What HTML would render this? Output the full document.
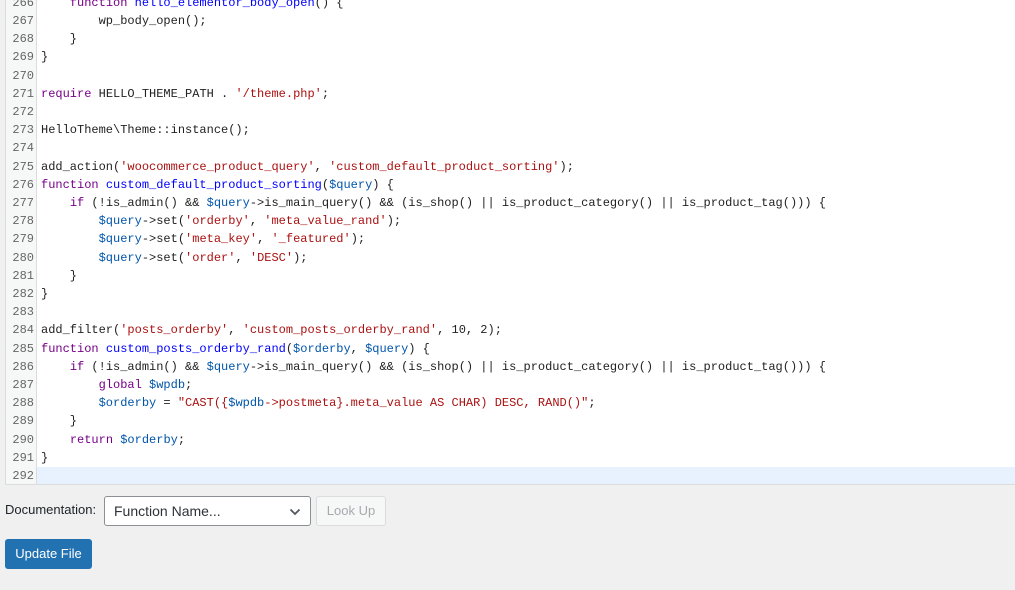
<!DOCTYPE html>
<html><head><meta charset="utf-8"><style>
body{margin:0;width:1015px;height:590px;background:#f0f0f1;position:relative;overflow:hidden;font-family:"Liberation Sans",sans-serif}
#ed{position:absolute;left:5px;top:0;width:1010px;height:485px;background:#fff;border-left:1px solid #dcdcde;border-bottom:1px solid #dcdcde;box-sizing:border-box;overflow:hidden}
#gut{position:absolute;left:0;top:0;width:30px;height:100%;background:#f6f7f7;border-right:1px solid #dcdcde}
#cur{position:absolute;left:31px;right:0;top:467px;height:18px;background:#e8f2fe}
#lines{position:absolute;left:0;top:-6.3px;font:12px/18.2px "Liberation Mono",monospace;color:#222;white-space:pre}
.n{display:inline-block;width:28px;text-align:right;color:#666;margin-right:7px}
.k{color:#708}.d{color:#00f}.v{color:#05a}.s{color:#a11}
#lab{position:absolute;left:5px;top:502px;font-size:13px;color:#1d2327}
#sel{position:absolute;left:104px;top:496px;width:207px;height:30px;box-sizing:border-box;border:1px solid #8c8f94;border-radius:3px;background:#fff;font-size:14px;color:#2c3338;padding:6px 0 0 9px}
#sel svg{position:absolute;right:9px;top:11px}
#lu{position:absolute;left:316px;top:496px;width:70px;height:30px;box-sizing:border-box;border:1px solid #dcdcde;border-radius:3px;background:#f6f7f7;color:#a7aaad;font-size:13px;text-align:center;line-height:28px}
#up{position:absolute;left:5px;top:539px;width:87px;height:30px;border-radius:3px;background:#2271b1;color:#fff;font-size:13px;text-align:center;line-height:30px}
</style></head><body>
<div id="ed"><div id="gut"></div><div id="cur"></div>
<div id="lines"><span class="n">266</span>    <span class="k">function</span> <span class="d">hello_elementor_body_open</span>() {
<span class="n">267</span>        wp_body_open();
<span class="n">268</span>    }
<span class="n">269</span>}
<span class="n">270</span>
<span class="n">271</span><span class="k">require</span> HELLO_THEME_PATH . <span class="s">'/theme.php'</span>;
<span class="n">272</span>
<span class="n">273</span>HelloTheme\Theme::instance();
<span class="n">274</span>
<span class="n">275</span>add_action(<span class="s">'woocommerce_product_query'</span>, <span class="s">'custom_default_product_sorting'</span>);
<span class="n">276</span><span class="k">function</span> <span class="d">custom_default_product_sorting</span>(<span class="v">$query</span>) {
<span class="n">277</span>    <span class="k">if</span> (!is_admin() &amp;&amp; <span class="v">$query</span>-&gt;is_main_query() &amp;&amp; (is_shop() || is_product_category() || is_product_tag())) {
<span class="n">278</span>        <span class="v">$query</span>-&gt;set(<span class="s">'orderby'</span>, <span class="s">'meta_value_rand'</span>);
<span class="n">279</span>        <span class="v">$query</span>-&gt;set(<span class="s">'meta_key'</span>, <span class="s">'_featured'</span>);
<span class="n">280</span>        <span class="v">$query</span>-&gt;set(<span class="s">'order'</span>, <span class="s">'DESC'</span>);
<span class="n">281</span>    }
<span class="n">282</span>}
<span class="n">283</span>
<span class="n">284</span>add_filter(<span class="s">'posts_orderby'</span>, <span class="s">'custom_posts_orderby_rand'</span>, 10, 2);
<span class="n">285</span><span class="k">function</span> <span class="d">custom_posts_orderby_rand</span>(<span class="v">$orderby</span>, <span class="v">$query</span>) {
<span class="n">286</span>    <span class="k">if</span> (!is_admin() &amp;&amp; <span class="v">$query</span>-&gt;is_main_query() &amp;&amp; (is_shop() || is_product_category() || is_product_tag())) {
<span class="n">287</span>        <span class="k">global</span> <span class="v">$wpdb</span>;
<span class="n">288</span>        <span class="v">$orderby</span> = <span class="s">"CAST({</span><span class="v">$wpdb</span><span class="s">-&gt;postmeta}.meta_value AS CHAR) DESC, RAND()"</span>;
<span class="n">289</span>    }
<span class="n">290</span>    <span class="k">return</span> <span class="v">$orderby</span>;
<span class="n">291</span>}
<span class="n">292</span>
</div></div>
<div id="lab">Documentation:</div>
<div id="sel">Function Name...<svg width="12" height="8" viewBox="0 0 12 8"><path d="M1.5 1.5 L6 6 L10.5 1.5" fill="none" stroke="#50575e" stroke-width="1.8"/></svg></div>
<div id="lu">Look Up</div>
<div id="up">Update File</div>
</body></html>
